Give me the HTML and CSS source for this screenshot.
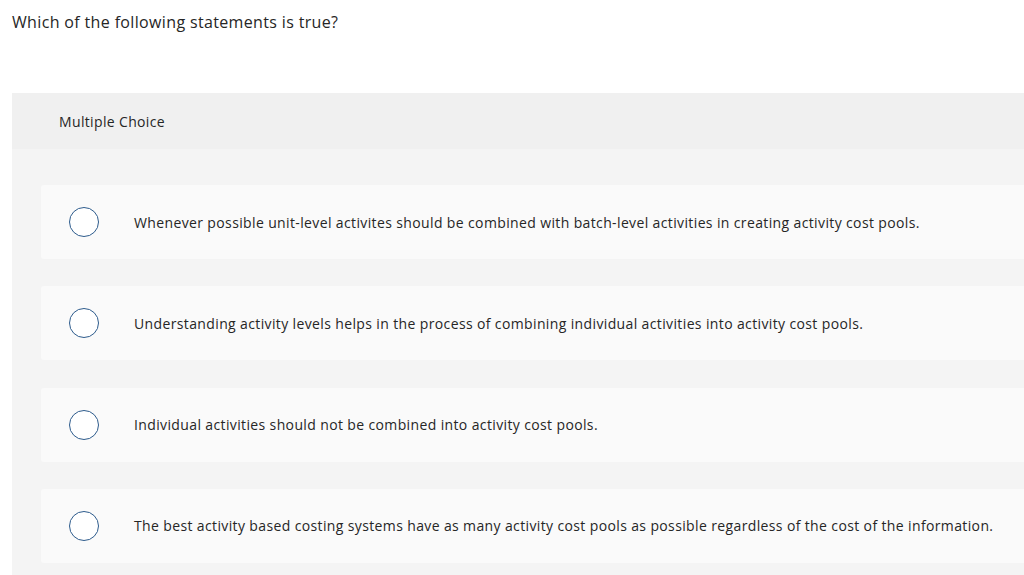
FILE: index.html
```html
<!DOCTYPE html>
<html>
<head>
<meta charset="utf-8">
<link rel="stylesheet" href="styles.css">
</head>
<body>
<p class="question">Which of the following statements is true?</p>
<section class="mc">
  <div class="mc-head">Multiple Choice</div>
  <div class="mc-body">
    <div class="option">
      <span class="radio"></span>
      <span class="label">Whenever possible unit-level activites should be combined with batch-level activities in creating activity cost pools.</span>
    </div>
    <div class="option">
      <span class="radio"></span>
      <span class="label">Understanding activity levels helps in the process of combining individual activities into activity cost pools.</span>
    </div>
    <div class="option">
      <span class="radio"></span>
      <span class="label">Individual activities should not be combined into activity cost pools.</span>
    </div>
    <div class="option">
      <span class="radio"></span>
      <span class="label">The best activity based costing systems have as many activity cost pools as possible regardless of the cost of the information.</span>
    </div>
  </div>
</section>
</body>
</html>
```
FILE: styles.css
```css
html, body {
  margin: 0;
  padding: 0;
  background: #ffffff;
  overflow: hidden;
}
body {
  font-family: "Open Sans", "Lato", sans-serif;
  color: #262626;
  width: 1024px;
  height: 575px;
}
.question {
  margin: 0;
  padding: 12px 0 0 12px;
  font-size: 16px;
  letter-spacing: 0.35px;
  line-height: 20px;
  height: 93px;
  box-sizing: border-box;
}
.mc {
  margin-left: 12px;
  width: 1030px;
}
.mc-head {
  background: #f0f0f0;
  height: 56px;
  display: flex;
  align-items: center;
  padding-left: 47px;
  font-size: 14px;
  letter-spacing: 0.35px;
}
.mc-body {
  background: #f4f4f4;
  padding: 36px 0 12px 29px;
  display: flex;
  flex-direction: column;
  gap: 27.33px;
}
.option {
  background: #fafafa;
  height: 74px;
  border-radius: 3px 0 0 3px;
  display: flex;
  align-items: center;
  padding-left: 28px;
}
.radio {
  width: 28px;
  height: 28px;
  border: 1.5px solid #2d5b8c;
  border-radius: 50%;
  background: #ffffff;
  flex: none;
}
.label {
  margin-left: 35px;
  font-size: 14px;
  letter-spacing: 0.37px;
}
```
